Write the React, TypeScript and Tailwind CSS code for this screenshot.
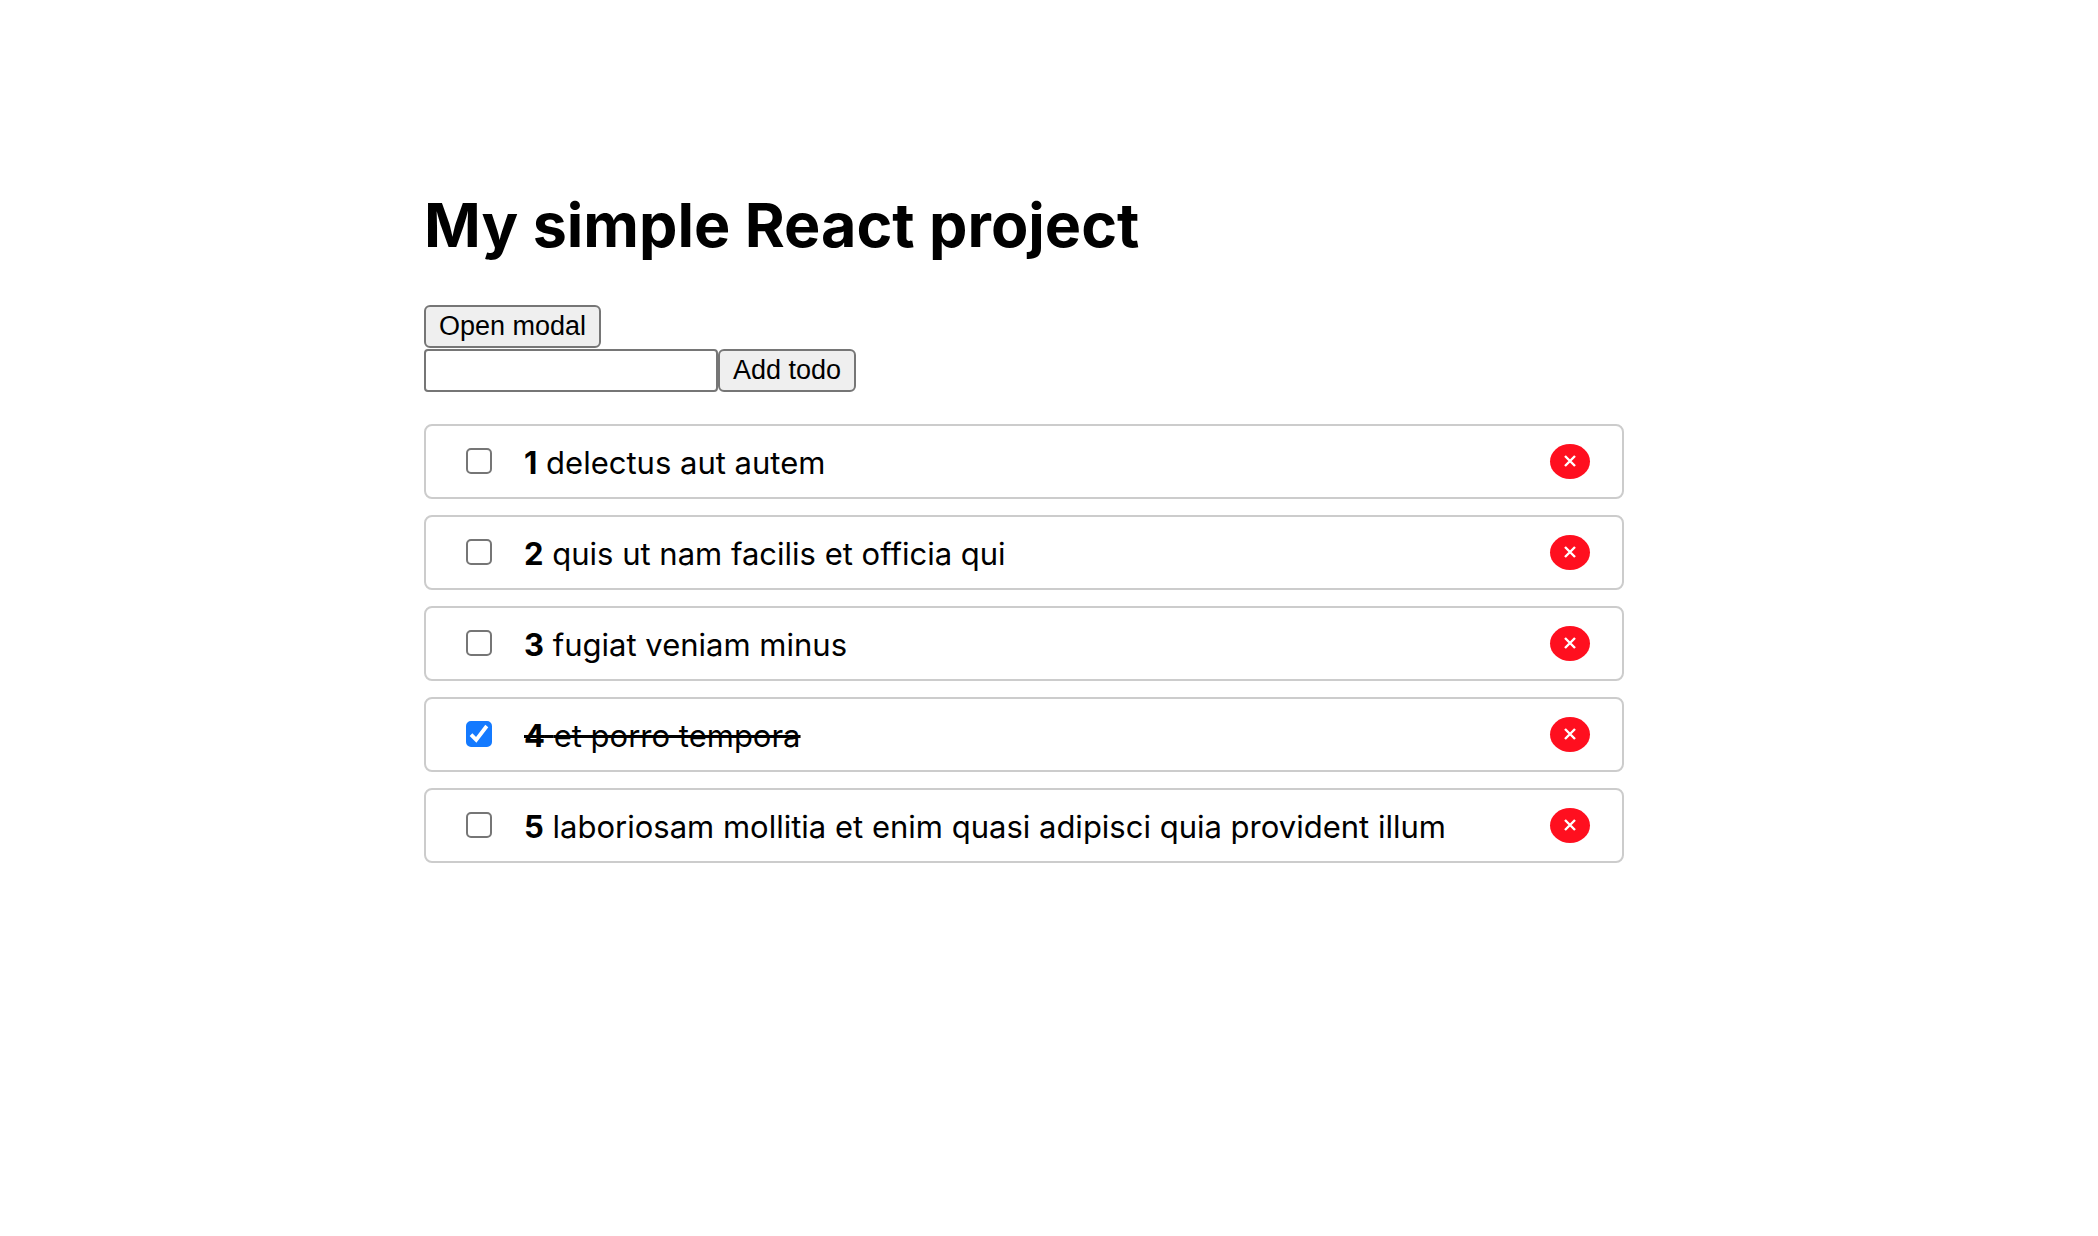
import { useState, type FormEvent } from "react";

type Todo = { id: number; title: string; completed: boolean };

const initialTodos: Todo[] = [
  { id: 1, title: "delectus aut autem", completed: false },
  { id: 2, title: "quis ut nam facilis et officia qui", completed: false },
  { id: 3, title: "fugiat veniam minus", completed: false },
  { id: 4, title: "et porro tempora", completed: true },
  { id: 5, title: "laboriosam mollitia et enim quasi adipisci quia provident illum", completed: false },
];

const buttonClass =
  "h-[43px] rounded-md border-2 border-[#767676] bg-[#efefef] px-[13px] pb-0.5 font-['Liberation_Sans',Arial,sans-serif] text-[27px] leading-8";

function TodoItem({ todo, onToggle, onRemove }: { todo: Todo; onToggle: () => void; onRemove: () => void }) {
  return (
    <li className="flex items-center justify-between rounded-lg border-2 border-[#cccccc] px-8 py-[18px]">
      <label className="flex items-start gap-8 pl-2">
        <span className="mt-1 grid size-[26px] shrink-0">
          <input
            type="checkbox"
            checked={todo.completed}
            onChange={onToggle}
            className="peer col-start-1 row-start-1 size-[26px] appearance-none rounded-[5px] border-2 border-[#767676] bg-white checked:border-[#147aff] checked:bg-[#147aff]"
          />
          <svg
            viewBox="0 0 26 26"
            className="pointer-events-none invisible col-start-1 row-start-1 size-[26px] peer-checked:visible"
            fill="none"
            stroke="white"
            strokeWidth="3.8"
            aria-hidden="true"
          >
            <path d="M5 13.6 L10.2 18.8 L20.8 5" />
          </svg>
        </span>
        <span className={todo.completed ? "pt-[3px] leading-8 line-through" : "pt-[3px] leading-8"}>
          <strong>{todo.id}</strong> {todo.title}
        </span>
      </label>
      <button
        type="button"
        aria-label={`Remove ${todo.title}`}
        onClick={onRemove}
        className="flex h-[35px] w-10 shrink-0 items-start justify-center rounded-[50%] bg-[#ff0f1f] pt-[11px]"
      >
        <svg viewBox="0 0 12 12" className="size-3" stroke="white" strokeWidth="2.4" aria-hidden="true">
          <path d="M1 1 L11 11 M11 1 L1 11" />
        </svg>
      </button>
    </li>
  );
}

export default function App() {
  const [todos, setTodos] = useState(initialTodos);
  const [text, setText] = useState("");

  const addTodo = (event: FormEvent) => {
    event.preventDefault();
    if (!text.trim()) return;
    setTodos([...todos, { id: todos.length + 1, title: text, completed: false }]);
    setText("");
  };

  return (
    <div className="min-h-screen bg-white pt-[185px] pr-[50px] font-[Inter,sans-serif] text-black">
      <main className="mx-auto max-w-[1200px]">
        <h1 className="mb-10 text-[61px] leading-20 font-bold">My simple React project</h1>
        <button type="button" className={buttonClass}>
          Open modal
        </button>
        <form onSubmit={addTodo} className="mt-px flex">
          <input
            type="text"
            aria-label="New todo"
            value={text}
            onChange={(event) => setText(event.target.value)}
            className="h-[43px] w-[294px] rounded-sm border-2 border-[#767676] bg-white px-1 text-[27px]"
          />
          <button type="submit" className={buttonClass}>
            Add todo
          </button>
        </form>
        <ul className="mt-8 flex flex-col gap-4 text-[31px]">
          {todos.map((todo) => (
            <TodoItem
              key={todo.id}
              todo={todo}
              onToggle={() =>
                setTodos(todos.map((item) => (item.id === todo.id ? { ...item, completed: !item.completed } : item)))
              }
              onRemove={() => setTodos(todos.filter((item) => item.id !== todo.id))}
            />
          ))}
        </ul>
      </main>
    </div>
  );
}
